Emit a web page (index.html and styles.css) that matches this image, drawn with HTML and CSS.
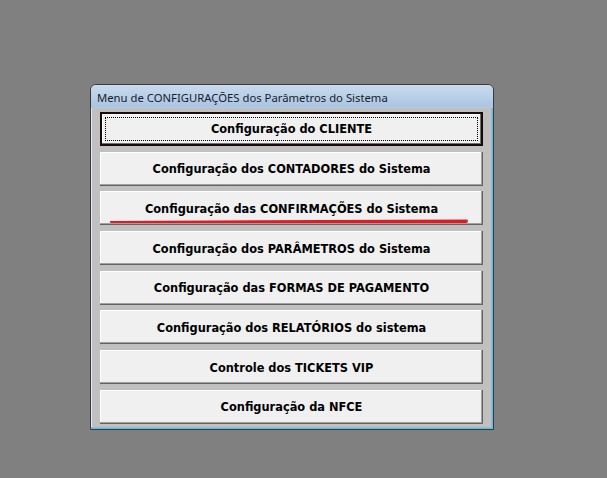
FILE: index.html
```html
<!DOCTYPE html>
<html lang="pt">
<head>
<meta charset="utf-8">
<title>Menu de Configurações</title>
<link rel="stylesheet" href="styles.css">
</head>
<body>
<div class="window">
  <div class="titlebar">Menu de CONFIGURAÇÕES dos Parâmetros do Sistema</div>
  <div class="body">
    <button class="btn focused"><span class="focus">Configuração do CLIENTE</span></button>
    <button class="btn">Configuração dos CONTADORES do Sistema</button>
    <button class="btn marked">Configuração das CONFIRMAÇÕES do Sistema<span class="redline"></span></button>
    <button class="btn">Configuração dos PARÂMETROS do Sistema</button>
    <button class="btn">Configuração das FORMAS DE PAGAMENTO</button>
    <button class="btn">Configuração dos RELATÓRIOS do sistema</button>
    <button class="btn">Controle dos TICKETS VIP</button>
    <button class="btn">Configuração da NFCE</button>
  </div>
</div>
</body>
</html>
```

FILE: styles.css
```css
html, body {
  margin: 0;
  padding: 0;
  background: #808080;
  width: 607px;
  height: 478px;
  overflow: hidden;
}
.window {
  margin: 84px 0 0 90px;
  width: 402px;
  height: 344px;
  border: 1px solid #3a3a3a;
  border-radius: 6px 6px 0 0;
  background: #c0c0c0;
  box-shadow: inset -1px -1px 0 #4fc3e8, inset -2px -2px 0 #9fb7c9, inset 1px 0 0 #dfe9f3;
  display: flex;
  flex-direction: column;
}
.titlebar {
  border-radius: 5px 5px 0 0;
  background: linear-gradient(#c9dbee, #a9c5e2);
  border-bottom: 1px solid #b4cae0;
  font-family: "Noto Sans", "DejaVu Sans", sans-serif;
  font-size: 11.3px;
  color: #1a1a2e;
  line-height: 22px;
  padding-left: 6px;
  padding-top: 2px;
  box-sizing: border-box;
  height: 23px;
}
.body {
  padding: 4px 9px 0 9px;
  display: flex;
  flex-direction: column;
  gap: 5.7px;
}
.btn {
  position: relative;
  height: 34px;
  width: 383px;
  margin: 0;
  padding: 1px 0 0 0;
  background: #f0f0f0;
  border: none;
  box-shadow: inset -1px -1px 0 #646464, inset -2px -2px 0 #a0a0a0, inset 1px 1px 0 #ffffff;
  font-family: "DejaVu Sans", Tahoma, sans-serif;
  font-weight: bold;
  font-size: 11.4px;
  color: #000;
  display: flex;
  align-items: center;
  justify-content: center;
}
.btn.focused {
  border: 2px solid #1a0a0a;
  box-shadow: inset -1px -1px 0 #707070, inset 1px 1px 0 #ffffff;
  height: 34px;
  box-sizing: border-box;
  padding: 0;
}
.btn.focused .focus {
  position: absolute;
  left: 3px;
  top: 3px;
  right: 3px;
  bottom: 3px;
  border: 1px dotted #000;
  display: flex;
  align-items: center;
  justify-content: center;
}
.redline {
  position: absolute;
  left: 10px;
  right: 15px;
  bottom: 2px;
  height: 4px;
  background: #e21b23;
  border-radius: 2px 3px 3px 2px;
  clip-path: polygon(0 40%, 100% 0, 100% 100%, 0 90%);
}
```
